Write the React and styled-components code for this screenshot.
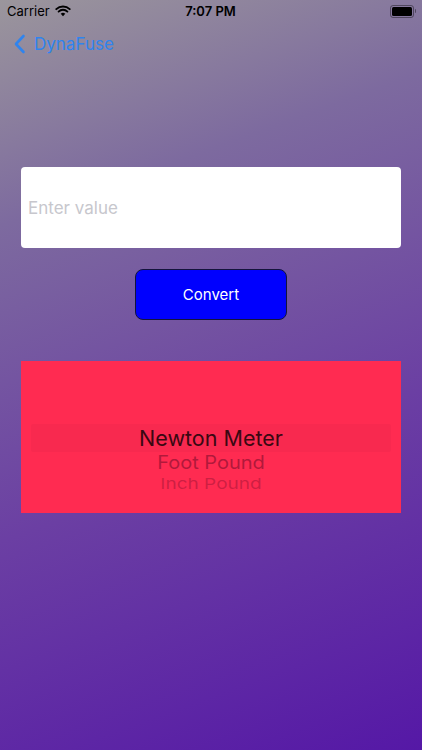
import React from 'react'
import styled, { createGlobalStyle } from "styled-components";

const GlobalStyle = createGlobalStyle`
  html, body {
    margin: 0;
    padding: 0;
  }
  body {
    font-family: "Liberation Sans", Arial, sans-serif;
  }
`;

const Screen = styled.div`
  width: 422px;
  height: 750px;
  overflow: hidden;
  display: flex;
  flex-direction: column;
  background: linear-gradient(160deg, #9b969c 0%, #7d6a9f 25%, #6b3fa3 60%, #5518a6 100%);
`;

const StatusBar = styled.div`
  height: 22px;
  display: grid;
  grid-template-columns: 1fr auto 1fr;
  align-items: center;
  padding: 0 8px 0 7px;
  color: #000;
  font-size: 13px;
  font-family: "Inter", "Liberation Sans", sans-serif;

  & .left {
    display: flex;
    align-items: center;
    gap: 5px;
  }
  & .time {
    font-weight: 600;
    font-size: 13px;
  }
  & .right {
    display: flex;
    justify-content: flex-end;
  }
`;

const Battery = styled.div`
  width: 20px;
  height: 9px;
  border: 1px solid rgba(0,0,0,0.4);
  border-radius: 3px;
  padding: 1px;
  position: relative;
  &::before {
    content: "";
    display: block;
    height: 100%;
    background: #000;
    border-radius: 1.5px;
  }
  &::after {
    content: "";
    position: absolute;
    right: -3px;
    top: 3px;
    width: 1.5px;
    height: 4px;
    background: rgba(0,0,0,0.4);
    border-radius: 0 1px 1px 0;
  }
`;

const NavBar = styled.div`
  height: 44px;
  display: flex;
  align-items: center;
  padding-left: 14px;
  gap: 8px;
  color: #2f84ee;
  font-family: "Inter", "Liberation Sans", sans-serif;
  font-size: 17px;
`;

const Content = styled.div`
  display: flex;
  flex-direction: column;
  align-items: center;
  padding: 101px 21px 0 21px;
`;

const Field = styled.input`
  box-sizing: border-box;
  width: 380px;
  height: 81px;
  border: none;
  border-radius: 4px;
  background: #fff;
  padding: 0 7px;
  font-family: "Inter", "Liberation Sans", sans-serif;
  font-size: 17px;
  outline: none;
  &::placeholder {
    color: #c7c7cd;
  }
`;

const ConvertButton = styled.button`
  margin-top: 21px;
  width: 152px;
  height: 51px;
  background: #0000fe;
  border: 1px solid #14143c;
  border-radius: 8px;
  color: #fff;
  font-family: "Inter", "Liberation Sans", sans-serif;
  font-size: 15px;
`;

const Picker = styled.div`
  margin-top: 41px;
  width: 380px;
  height: 152px;
  background: #ff2b51;
  display: flex;
  flex-direction: column;
  align-items: center;
  padding-top: 63px;
  box-sizing: border-box;
  position: relative;
  font-family: "Inter", "Liberation Sans", sans-serif;
`;

const SelectionBand = styled.div`
  position: absolute;
  left: 10px;
  right: 10px;
  top: 63px;
  height: 28px;
  background: rgba(120, 20, 50, 0.05);
  border-radius: 2px;
`;

const PickerRow = styled.div`
  height: ${p => p.$h}px;
  line-height: ${p => p.$h}px;
  font-size: ${p => p.$size}px;
  color: ${p => p.$color};
  transform: scaleY(${p => p.$squash});
  position: relative;
`;

const Wifi = () => (
  <svg width="16" height="12" viewBox="0 0 16 12">
    <path d="M8 11.2 L5.7 8.8 A3.3 3.3 0 0 1 10.3 8.8 Z" fill="#000" />
    <path d="M3.6 6.6 A6.3 6.3 0 0 1 12.4 6.6" stroke="#000" strokeWidth="1.9" fill="none" strokeLinecap="round" />
    <path d="M1.3 4.2 A9.5 9.5 0 0 1 14.7 4.2" stroke="#000" strokeWidth="1.9" fill="none" strokeLinecap="round" />
  </svg>
);

const Chevron = () => (
  <svg width="12" height="20" viewBox="0 0 12 20">
    <path d="M9.5 2 L2 10 L9.5 18" stroke="#2f84ee" strokeWidth="2.6" fill="none" strokeLinecap="round" strokeLinejoin="round" />
  </svg>
);

export default function App() {
  return (
    <>
      <GlobalStyle />
      <Screen>
        <StatusBar>
          <div className="left">Carrier <Wifi /></div>
          <div className="time">7:07 PM</div>
          <div className="right"><Battery /></div>
        </StatusBar>
        <NavBar>
          <Chevron />
          <span>DynaFuse</span>
        </NavBar>
        <Content>
          <Field placeholder="Enter value" />
          <ConvertButton>Convert</ConvertButton>
          <Picker>
            <SelectionBand />
            <PickerRow $h={28} $size={21.5} $color="#3a0812" $squash={1}>Newton Meter</PickerRow>
            <PickerRow $h={22} $size={20} $color="rgba(110, 10, 40, 0.55)" $squash={0.92}>Foot Pound</PickerRow>
            <PickerRow $h={20} $size={19} $color="rgba(110, 10, 40, 0.35)" $squash={0.78}>Inch Pound</PickerRow>
          </Picker>
        </Content>
      </Screen>
    </>
  );
}
